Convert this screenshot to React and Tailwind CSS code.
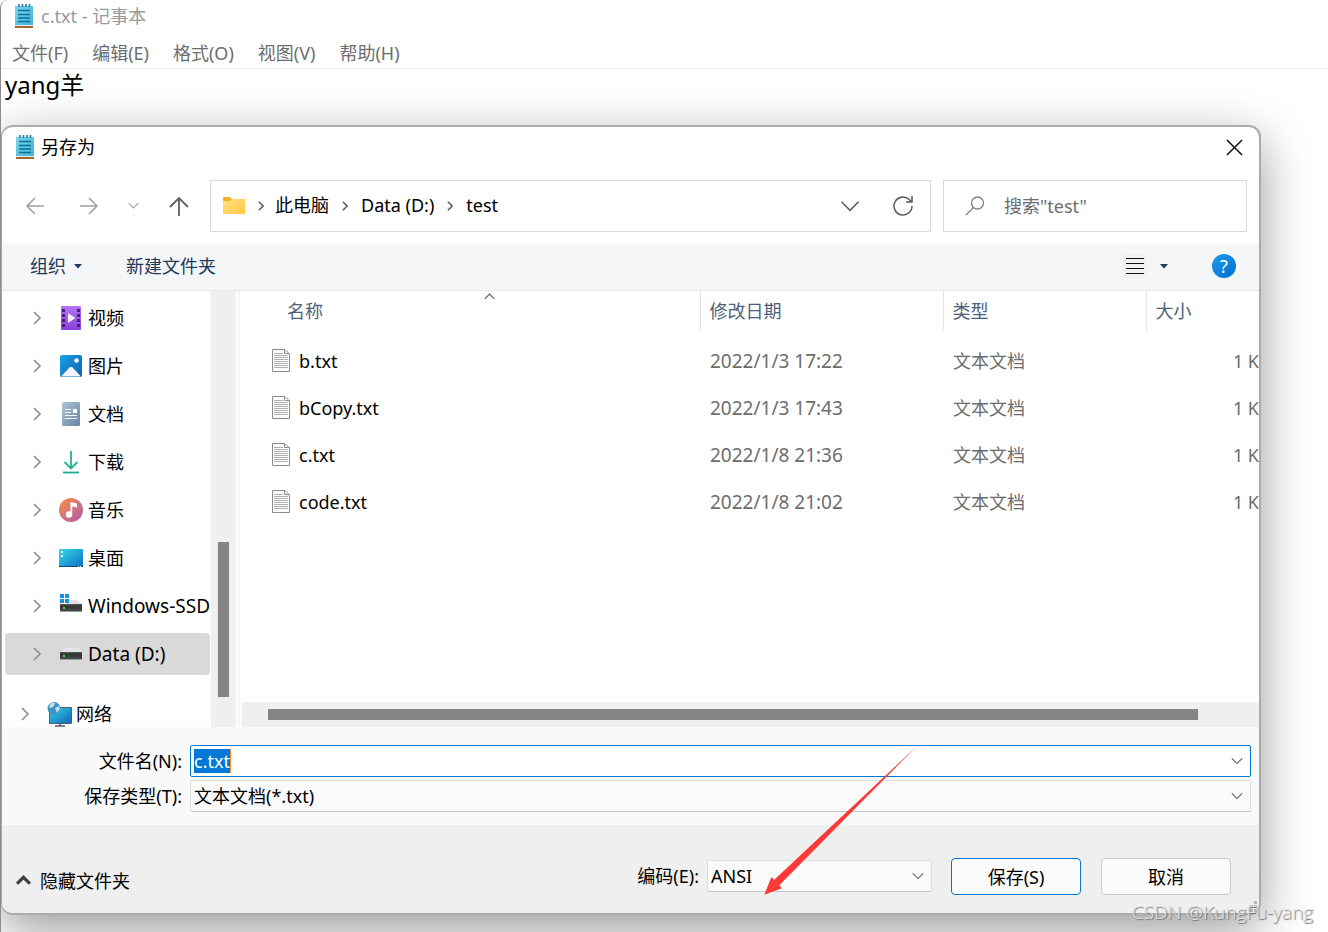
import React from 'react';

function Chevron({ dir = 'right', size = 14, stroke = '#8a8a8a', width = 1.5 }) {
    const paths = {
        right: 'M4 1 L10 7 L4 13',
        down: 'M1 4 L7 10 L13 4',
        up: 'M1 10 L7 4 L13 10'
    };
    return (
        <svg width={size} height={size} viewBox="0 0 14 14" fill="none" stroke={stroke} strokeWidth={width} className="shrink-0">
            <path d={paths[dir]} />
        </svg>
    );
}

function NotepadIcon() {
    return (
        <svg width="20" height="26" viewBox="0 0 20 26" className="shrink-0">
            <defs>
                <linearGradient id="notepad" x1="0" y1="0" x2="1" y2="1">
                    <stop offset="0" stopColor="#7dd6ea" />
                    <stop offset="1" stopColor="#3fb3d6" />
                </linearGradient>
            </defs>
            <rect x="1" y="23" width="18" height="2" fill="#a5632f" />
            <rect x="1" y="21" width="18" height="2" fill="#e8edf0" />
            <rect x="1" y="3" width="18" height="19" fill="url(#notepad)" />
            <path d="M5 1v3M8.500 1v3M12 1v3M15.500 1v3" stroke="#1d7ea3" strokeWidth="1.600" />
            <path d="M4 7.500h12M4 11.500h12M4 15h12M4 18.500h12" stroke="#0d7196" strokeWidth="1.300" />
        </svg>
    );
}

function FolderIcon() {
    return (
        <svg width="24" height="20" viewBox="0 0 24 20" className="shrink-0">
            <defs>
                <linearGradient id="folder" x1="0" y1="0" x2="1" y2="1">
                    <stop offset="0" stopColor="#ffe08a" />
                    <stop offset="1" stopColor="#ffcb3d" />
                </linearGradient>
            </defs>
            <path d="M1 2Q1 1 2 1H8L10 3H22Q23 3 23 4V8H1Z" fill="#f5b21b" />
            <path d="M1 5H8L10.500 3H22Q23 3 23 4V17Q23 18 22 18H2Q1 18 1 17Z" fill="url(#folder)" />
        </svg>
    );
}

function VideoIcon() {
    return (
        <svg width="24" height="24" viewBox="0 0 24 24">
            <defs>
                <linearGradient id="video" x1="0" y1="0" x2="0" y2="1">
                    <stop offset="0" stopColor="#b673f2" />
                    <stop offset="1" stopColor="#8a3fe0" />
                </linearGradient>
            </defs>
            <rect x="2" y="0" width="20" height="24" rx="1" fill="url(#video)" />
            <path d="M4.500 3v19M19.500 3v19" stroke="#46207a" strokeWidth="3" strokeDasharray="3 2" />
            <path d="M9 7L16.500 12L9 17Z" fill="#f4ecfc" />
        </svg>
    );
}

function PictureIcon() {
    return (
        <svg width="24" height="24" viewBox="0 0 24 24">
            <defs>
                <linearGradient id="picture" x1="0" y1="0" x2="1" y2="1">
                    <stop offset="0" stopColor="#1ba1e6" />
                    <stop offset="1" stopColor="#0a5fb0" />
                </linearGradient>
            </defs>
            <rect x="1" y="1" width="22" height="22" rx="2" fill="url(#picture)" />
            <path d="M2.500 22L10.500 13.500Q12 12 13.500 13.500L21.500 22Q21 22.500 20 22.500H4Q3 22.500 2.500 22Z" fill="#f2f7fc" />
            <circle cx="17.500" cy="6.500" r="2.200" fill="#fff" />
        </svg>
    );
}

function DocumentIcon() {
    return (
        <svg width="24" height="24" viewBox="0 0 24 24">
            <defs>
                <linearGradient id="document" x1="0" y1="0" x2="1" y2="1">
                    <stop offset="0" stopColor="#b3c4d6" />
                    <stop offset="1" stopColor="#6584a5" />
                </linearGradient>
            </defs>
            <rect x="3" y="0" width="18" height="24" rx="1.500" fill="url(#document)" />
            <path d="M6 7.500h6M6 10.500h6M6 13.500h12M6 16.500h12" stroke="#fff" />
            <rect x="14" y="7" width="4" height="4" fill="#fff" />
        </svg>
    );
}

function DownloadIcon() {
    return (
        <svg width="24" height="24" viewBox="0 0 24 24" fill="none" strokeWidth="1.800">
            <path d="M12 1V18M5.500 12L12 18.500L18.500 12" stroke="#21b58a" />
            <path d="M4 22.500H20" stroke="#1aae96" />
        </svg>
    );
}

function MusicIcon() {
    return (
        <svg width="24" height="24" viewBox="0 0 24 24">
            <defs>
                <linearGradient id="music" x1="0" y1="0" x2="1" y2="1">
                    <stop offset="0.100" stopColor="#f58a4b" />
                    <stop offset="1" stopColor="#a85bb5" />
                </linearGradient>
            </defs>
            <circle cx="12" cy="12" r="12" fill="url(#music)" />
            <circle cx="10" cy="16.500" r="3.200" fill="#fff" />
            <path d="M11.500 4L18 5.500V9.500L13.200 8.500V16.500H11.500Z" fill="#fff" />
        </svg>
    );
}

function DesktopIcon() {
    return (
        <svg width="24" height="24" viewBox="0 0 24 24">
            <defs>
                <linearGradient id="desktop" x1="0" y1="0" x2="1" y2="1">
                    <stop offset="0" stopColor="#35dbe6" />
                    <stop offset="1" stopColor="#0d6fc2" />
                </linearGradient>
            </defs>
            <rect x="0" y="3" width="24" height="18" rx="1" fill="url(#desktop)" />
            <path d="M0 20.500H24" stroke="#0a4a80" />
            <path d="M2 5h2v2h-2zM2 9h2v2h-2z" fill="#fff" />
            <path d="M19 20.500h1M21 20.500h1" stroke="#fff" />
        </svg>
    );
}

function DriveIcon({ windows }) {
    return (
        <svg width="24" height="24" viewBox="0 0 24 24">
            <defs>
                <linearGradient id="drive" x1="0" y1="0" x2="0" y2="1">
                    <stop offset="0" stopColor="#5a5a5a" />
                    <stop offset="0.300" stopColor="#333333" />
                    <stop offset="1" stopColor="#4a4a4a" />
                </linearGradient>
            </defs>
            <path d={windows ? 'M10 6H19L23 10H8Z' : 'M5 6H19L23 10H1Z'} fill="#e3e3e6" />
            <rect x="1" y="10" width="22" height="7" fill="url(#drive)" />
            <path d="M1 17.500H23" stroke="#9a9a9a" />
            <rect x="4" y="13" width="2" height="2" fill="#35e04a" />
            {windows && <path d="M1 0h4v4h-4zM6 0h4v4h-4zM1 5h4v4h-4zM6 5h4v4h-4z" fill="#1592e0" />}
        </svg>
    );
}

function NetworkIcon() {
    return (
        <svg width="26" height="26" viewBox="0 0 26 26">
            <defs>
                <linearGradient id="network" x1="0" y1="0" x2="1" y2="1">
                    <stop offset="0" stopColor="#2fd0e0" />
                    <stop offset="1" stopColor="#1169bb" />
                </linearGradient>
            </defs>
            <rect x="2" y="6" width="23" height="17" rx="1" fill="#48616f" />
            <rect x="3" y="7" width="21" height="15" fill="url(#network)" />
            <path d="M13 23v2M8 25h10" stroke="#50606b" strokeWidth="1.500" />
            <circle cx="7" cy="7.500" r="6.500" fill="#3f94bf" />
            <path d="M3 3Q6 1 8 2L7 5L4 7L2 7ZM8 7L12 5L13 8L10 12Z" fill="#b8dfee" />
        </svg>
    );
}

function FileIcon() {
    return (
        <svg width="18" height="23" viewBox="0 0 18 23" className="shrink-0">
            <path d="M0.500 0.500H13L17.500 5V22.500H0.500Z" fill="#fcfcfc" stroke="#8a8d90" />
            <path d="M12.500 0.500V4.500H17.500" fill="none" stroke="#8a8d90" />
            <path d="M2 4.500H11M2 6.500H16M2 8.500H16M2 10.500H16M2 12.500H16M2 14.500H16M2 16.500H16M2 18.500H16" stroke="#b0b0b0" />
        </svg>
    );
}

const menus = ['文件(F)', '编辑(E)', '格式(O)', '视图(V)', '帮助(H)'];

const places = [
    { name: '视频', icon: <VideoIcon /> },
    { name: '图片', icon: <PictureIcon /> },
    { name: '文档', icon: <DocumentIcon /> },
    { name: '下载', icon: <DownloadIcon /> },
    { name: '音乐', icon: <MusicIcon /> },
    { name: '桌面', icon: <DesktopIcon /> },
    { name: 'Windows-SSD', icon: <DriveIcon windows />, style: 'text-[19px]' },
    { name: 'Data (D:)', icon: <DriveIcon />, style: 'bg-[#d9d9d9] text-[19px]' }
];

const files = [
    { name: 'b.txt', date: '2022/1/3 17:22' },
    { name: 'bCopy.txt', date: '2022/1/3 17:43' },
    { name: 'c.txt', date: '2022/1/8 21:36' },
    { name: 'code.txt', date: '2022/1/8 21:02' }
];

function NavBar() {
    return (
        <div className="flex h-[75px] shrink-0 items-center pr-3">
            <div className="flex w-52 shrink-0 items-center text-[#a0a0a0]">
                <button aria-label="后退" className="ml-[21px] flex w-6 justify-center">
                    <svg width="20" height="20" viewBox="0 0 20 20" fill="none" stroke="currentColor" strokeWidth="1.600">
                        <path d="M19 10H2M10 2L2 10L10 18" />
                    </svg>
                </button>
                <button aria-label="前进" className="ml-[30px] flex w-6 justify-center">
                    <svg width="20" height="20" viewBox="0 0 20 20" fill="none" stroke="currentColor" strokeWidth="1.600">
                        <path d="M1 10H18M10 2L18 10L10 18" />
                    </svg>
                </button>
                <button aria-label="最近位置" className="ml-5 flex w-6 justify-center">
                    <Chevron dir="down" size={11} stroke="#a0a0a0" />
                </button>
                <button aria-label="上移" className="ml-[22px] flex w-6 justify-center text-[#606060]">
                    <svg width="20" height="20" viewBox="0 0 20 20" fill="none" stroke="currentColor" strokeWidth="1.800">
                        <path d="M10 20V2M1 11L10 2L19 11" />
                    </svg>
                </button>
            </div>
            <div className="flex h-[52px] min-w-0 flex-1 items-center border border-[#d9d9d9] pr-4 pl-[11px]">
                <FolderIcon />
                <nav className="ml-px flex flex-1 items-center pb-[2px]">
                    {['此电脑', 'Data (D:)', 'test'].map((crumb) => (
                        <React.Fragment key={crumb}>
                            <span className="flex w-8 justify-center pt-[2px] first:w-7">
                                <Chevron size={10} stroke="#5a5a5a" width={2.2} />
                            </span>
                            <a href="#" className="whitespace-nowrap">{crumb}</a>
                        </React.Fragment>
                    ))}
                </nav>
                <button aria-label="历史记录" className="mr-8">
                    <Chevron dir="down" size={20} stroke="#606060" width={1.1} />
                </button>
                <button aria-label="刷新">
                    <svg width="22" height="22" viewBox="0 0 22 22" fill="none" stroke="#606060" strokeWidth="1.600">
                        <path d="M20 11A9 9 0 1 1 17.500 4.800L19.500 6.500M20 1V7H14" />
                    </svg>
                </button>
            </div>
            <label className="ml-3 flex h-[52px] w-[304px] shrink-0 items-center border border-[#d9d9d9] pl-5">
                <svg width="22" height="22" viewBox="0 0 22 22" fill="none" stroke="#808080" strokeWidth="1.300">
                    <circle cx="13.500" cy="8" r="6" />
                    <path d="M9.500 12.500L2 20" />
                </svg>
                <input type="text" aria-label="搜索" placeholder={'搜索"test"'} className="ml-[18px] min-w-0 flex-1 outline-none placeholder:text-[#6d6d6d]" />
            </label>
        </div>
    );
}

function Toolbar() {
    return (
        <div className="flex h-12 shrink-0 items-center border-b border-[#e6e7e8] bg-[#f4f6f8] pr-[23px] pb-px pl-7 text-[#1e395b]">
            <button className="flex items-center gap-2">
                组织
                <svg width="8" height="5" viewBox="0 0 8 5" fill="currentColor"><path d="M0 0H8L4 4.500Z" /></svg>
            </button>
            <button className="ml-11">新建文件夹</button>
            <div className="ml-auto flex items-center">
                <button aria-label="视图" className="flex h-6 w-6 items-center justify-center rounded bg-[#f1f1f1]">
                    <svg width="18" height="18" viewBox="0 0 18 18" stroke="#111"><path d="M0 1.500H18M0 6.500H18M0 11.500H18M0 16.500H18" /></svg>
                </button>
                <button aria-label="更多选项" className="ml-[13px]">
                    <svg width="8" height="5" viewBox="0 0 8 5" fill="currentColor"><path d="M0 0H8L4 4.500Z" /></svg>
                </button>
                <button aria-label="帮助" className="ml-11 h-6 w-6 rounded-full bg-linear-to-br from-[#1f9be6] to-[#006fd0] text-lg leading-6 text-white">?</button>
            </div>
        </div>
    );
}

function Sidebar() {
    return (
        <div className="flex w-[234px] shrink-0 overflow-hidden">
            <ul className="flex min-w-0 flex-1 flex-col gap-[6px] pt-[6px] pr-px pl-[3px]">
                {places.map((place) => (
                    <li key={place.name} className="shrink-0">
                        <button className={`flex h-[42px] w-full items-center rounded-sm pl-[25px] whitespace-nowrap ${place.style || ''}`}>
                            <Chevron />
                            <span className="mr-[5px] ml-[15px] w-6 shrink-0">{place.icon}</span>
                            {place.name}
                        </button>
                    </li>
                ))}
                <li className="mt-3 shrink-0">
                    <button className="flex h-[42px] w-full items-center pl-[13px]">
                        <Chevron />
                        <span className="mr-[3px] ml-[15px] shrink-0">
                            <NetworkIcon />
                        </span>
                        网络
                    </button>
                </li>
            </ul>
            <div className="flex w-[25px] shrink-0 flex-col items-center justify-end bg-[#efefef] pb-[30px]">
                <div className="h-[155px] w-[11px] bg-[#858585]" />
            </div>
        </div>
    );
}

function FileList() {
    return (
        <div className="ml-[2px] flex min-w-0 flex-1 flex-col border-l-2 border-[#f5f5f5]">
            <div className="relative min-h-0 flex-1 overflow-hidden">
                <span className="absolute top-0 left-[244px]">
                    <Chevron dir="up" size={11} stroke="#606060" />
                </span>
                <table className="w-full table-fixed text-left whitespace-nowrap text-[#6d6d6d]">
                    <thead className="text-[#4c607a]">
                        <tr className="h-10">
                            <th className="pl-[47px] font-normal">名称</th>
                            <th className="w-[243px] border-l border-[#e5e5e5] pl-[9px] font-normal">修改日期</th>
                            <th className="w-[203px] border-l border-[#e5e5e5] pl-[9px] font-normal">类型</th>
                            <th className="w-[113px] border-l border-[#e5e5e5] pl-[9px] font-normal">大小</th>
                        </tr>
                    </thead>
                    <tbody>
                        <tr className="h-[6px]"><td colSpan={4} /></tr>
                        {files.map((file) => (
                            <tr key={file.name} className="h-[47px]">
                                <td>
                                    <div className="flex items-center gap-[9px] pl-8 text-black">
                                        <FileIcon />
                                        {file.name}
                                    </div>
                                </td>
                                <td className="pl-[10px] text-[19px]">{file.date}</td>
                                <td className="pl-[10px]">文本文档</td>
                                <td className="text-right">1 K</td>
                            </tr>
                        ))}
                    </tbody>
                </table>
            </div>
            <div className="ml-[2px] flex h-[25px] shrink-0 items-center bg-[#efefef] pr-[61px] pl-[26px]">
                <div className="h-[11px] flex-1 bg-[#858585]" />
            </div>
        </div>
    );
}

function Select({ id, value }) {
    return (
        <div className="relative flex-1">
            <select id={id} defaultValue={value} className="h-8 w-full appearance-none rounded-xs border border-[#dedede] border-b-[#c8c8c8] bg-[#fafafa] pl-[3px]">
                <option>{value}</option>
            </select>
            <span className="pointer-events-none absolute top-[10px] right-2">
                <Chevron dir="down" size={12} stroke="#606060" width={1.3} />
            </span>
        </div>
    );
}

function FileForm() {
    return (
        <div className="flex shrink-0 flex-col gap-[3px] bg-[#f9f9f9] pt-[18px] pr-2 pb-[13px]">
            <div className="flex items-center gap-2">
                <label htmlFor="filename" className="w-[180px] text-right">文件名(N):</label>
                <div className="flex h-8 flex-1 items-center justify-between rounded-xs border border-[#0078d4] bg-white pr-[7px] pl-[3px]">
                    <input id="filename" type="text" defaultValue="c.txt" className="field-sizing-content h-6 border-r border-[#ff8728] bg-[#0078d7] text-white outline-none" />
                    <button aria-label="展开">
                        <Chevron dir="down" size={12} stroke="#606060" width={1.3} />
                    </button>
                </div>
            </div>
            <div className="flex items-center gap-2">
                <label htmlFor="filetype" className="w-[180px] text-right">保存类型(T):</label>
                <Select id="filetype" value="文本文档(*.txt)" />
            </div>
        </div>
    );
}

function Footer() {
    return (
        <div className="relative flex shrink-0 items-center rounded-b-[10px] bg-[#efefef] pt-[33px] pr-7 pb-[18px] pl-[14px]">
            <button className="mt-2 flex items-center gap-[9px]">
                <Chevron dir="up" size={15} stroke="#404040" width={3} />
                隐藏文件夹
            </button>
            <div className="ml-auto flex w-[295px] items-center justify-end gap-2 pb-px">
                <label htmlFor="encoding" className="whitespace-nowrap">编码(E):</label>
                <div className="flex w-[225px] shrink-0">
                    <Select id="encoding" value="ANSI" />
                </div>
            </div>
            <button className="ml-[19px] h-[37px] w-[130px] rounded border border-[#0078d4] bg-[#fbfbfb]">保存(S)</button>
            <button className="ml-5 h-[37px] w-[130px] rounded border border-[#c8c8c8] bg-[#fbfbfb]">取消</button>
            {/* Resize grip */}
            <svg width="12" height="12" viewBox="0 0 12 12" fill="#b4b4b4" className="absolute right-0 bottom-0">
                <path d="M7 0h3v3h-3zM7 4h3v3h-3zM7 8h3v3h-3zM3 4h3v3h-3zM3 8h3v3h-3z" />
            </svg>
        </div>
    );
}

export default function App() {
    return (
        <div className="relative flex h-screen flex-col overflow-hidden rounded-tl-lg border-l border-[#8c8c8c] bg-white font-['Noto_Sans','Noto_Sans_CJK_SC',sans-serif] text-lg leading-6 text-black">
            {/* Notepad window behind the dialog */}
            <header className="flex h-8 shrink-0 items-center gap-[7px] pl-[13px] text-[#999999]">
                <NotepadIcon />
                <h1>c.txt - 记事本</h1>
            </header>
            <nav className="flex h-9 shrink-0 items-center gap-6 pt-[6px] pl-[11px] text-[#6d6d6d]">
                {menus.map((menu) => (
                    <button key={menu}>{menu}</button>
                ))}
            </nav>
            <div className="h-[57px] shrink-0 border-t border-[#ececec] pl-1 text-2xl">yang羊</div>

            {/* Save As dialog */}
            <section className="mr-[67px] mb-[17px] flex min-h-0 flex-1 flex-col rounded-xl border-2 border-l border-[#ababab] bg-white shadow-[0_15px_50px_rgba(0,0,0,0.4)]">
                <div className="flex h-[41px] shrink-0 items-center gap-[6px] pr-4 pb-px pl-[13px]">
                    <NotepadIcon />
                    <h2 className="flex-1">另存为</h2>
                    <button aria-label="关闭">
                        <svg width="17" height="17" viewBox="0 0 17 17" stroke="#111" strokeWidth="1.500"><path d="M1 1L16 16M16 1L1 16" /></svg>
                    </button>
                </div>
                <NavBar />
                <Toolbar />
                <div className="flex min-h-0 flex-1">
                    <Sidebar />
                    <FileList />
                </div>
                <FileForm />
                <Footer />
            </section>

            {/* Red pointer drawn over the encoding box */}
            <svg width="156" height="150" viewBox="0 0 156 150" className="pointer-events-none absolute right-[410px] bottom-[36px]">
                <path d="M154 1L17.300 139.300L20 142.300L2.300 148.700L9.300 131.300L12.300 133.700Z" fill="#fb3a37" />
            </svg>
            <span className="absolute right-[15px] bottom-2 text-[#e4e4e4] text-shadow-[1px_1px_1px_#666666] font-['Open_Sans',sans-serif] text-[19px] font-light">CSDN @KungFu-yang</span>
        </div>
    );
}
